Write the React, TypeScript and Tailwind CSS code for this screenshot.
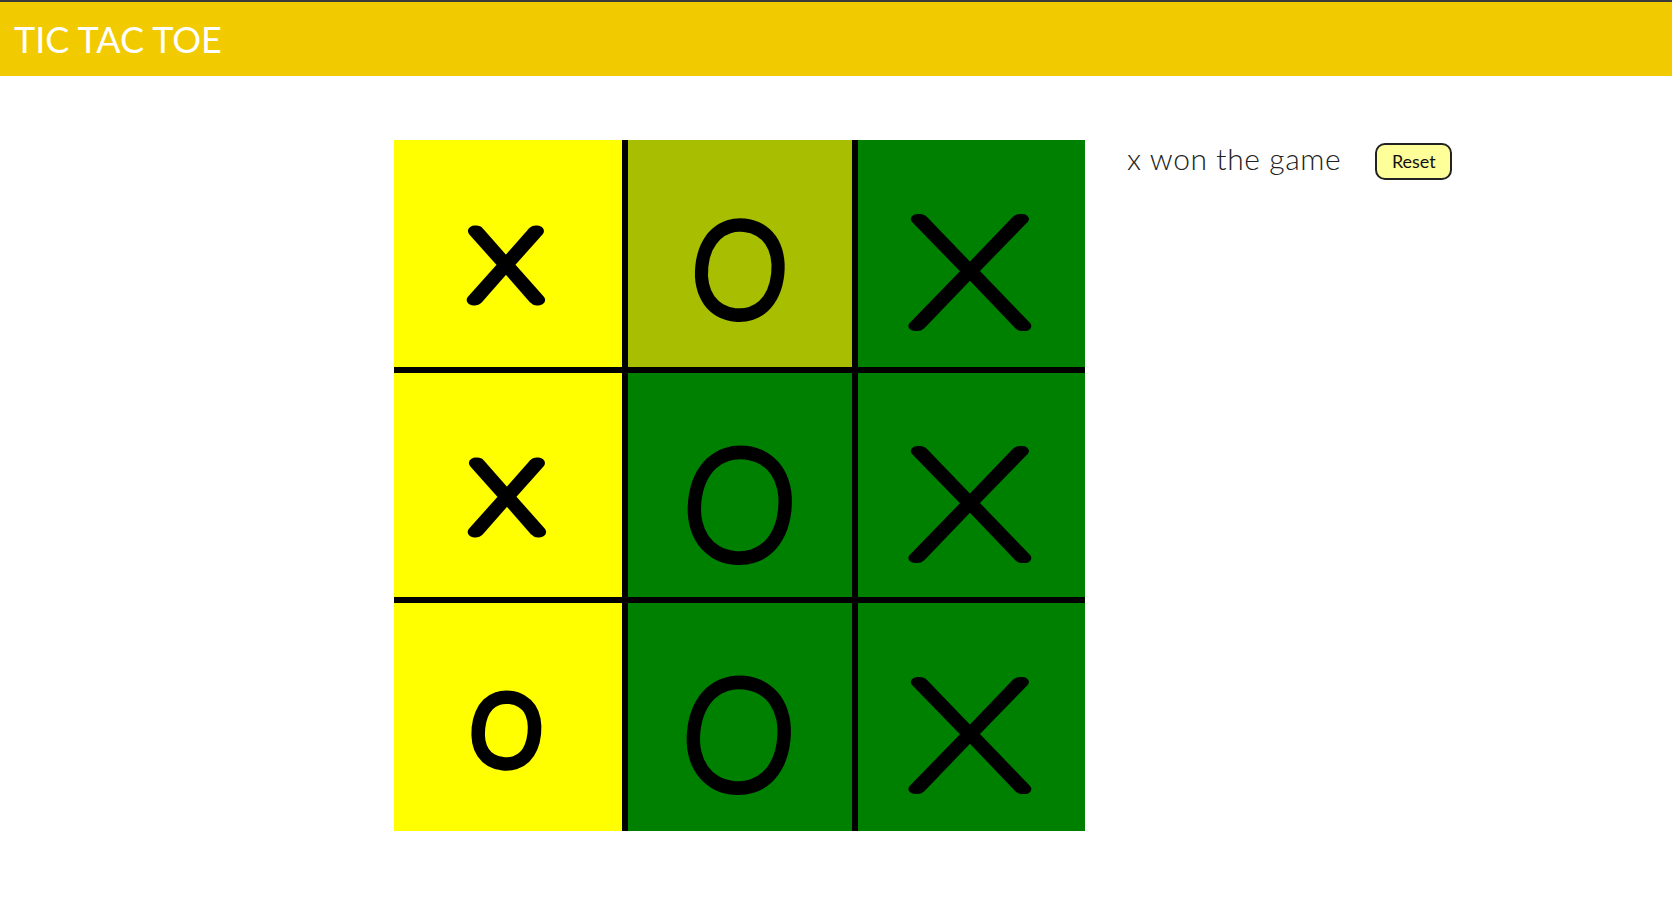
const cells = [
  { ch: "x", bg: "bg-[#ffff00]", size: 140, sx: 1.22, rot: 0, by: 160, cx: 112 },
  { ch: "O", bg: "bg-[#a8be00]", size: 128, sx: 0.94, rot: 6, by: 175, cx: 112 },
  { ch: "X", bg: "bg-[#008000]", size: 152, sx: 1.33, rot: 0, by: 186, cx: 112 },
  { ch: "x", bg: "bg-[#ffff00]", size: 140, sx: 1.22, rot: 0, by: 159, cx: 113 },
  { ch: "O", bg: "bg-[#008000]", size: 150, sx: 0.95, rot: 6, by: 185, cx: 112 },
  { ch: "X", bg: "bg-[#008000]", size: 152, sx: 1.33, rot: 0, by: 185, cx: 112 },
  { ch: "o", bg: "bg-[#ffff00]", size: 135, sx: 1, rot: 6, by: 161, cx: 114 },
  { ch: "O", bg: "bg-[#008000]", size: 150, sx: 0.95, rot: 6, by: 185, cx: 111 },
  { ch: "X", bg: "bg-[#008000]", size: 152, sx: 1.33, rot: 0, by: 186, cx: 112 },
];

const colW = [228, 224, 227];
const rowH = [227, 224, 228];

function Cell({ i }: { i: number }) {
  const c = cells[i];
  const w = colW[i % 3];
  const h = rowH[Math.floor(i / 3)];
  // rotate around the glyph's middle, which sits about half a cap height above the baseline
  const mid = -c.size * 0.36;
  return (
    <div className={`${c.bg} flex`}>
      <svg width={w} height={h} viewBox={`0 0 ${w} ${h}`}>
        <text
          transform={`translate(${c.cx} ${c.by}) rotate(${c.rot} 0 ${mid}) scale(${c.sx} 1)`}
          textAnchor="middle"
          fontSize={c.size}
          fontFamily="Lato, 'DejaVu Sans', sans-serif"
          fontWeight={100}
          fill="#000"
          stroke="#000"
          strokeWidth={12}
          strokeLinejoin="round"
          strokeLinecap="round"
          vectorEffect="non-scaling-stroke"
        >
          {c.ch}
        </text>
      </svg>
    </div>
  );
}

export default function App() {
  return (
    <div className="min-h-screen bg-white font-['Lato','Liberation_Sans',sans-serif]">
      <header className="h-[76px] border-t-2 border-[#3a3a3a] bg-[#f2ca00] flex items-center px-[14px]">
        <h1 className="text-white text-[36px] leading-none">TIC TAC TOE</h1>
      </header>
      <main className="flex items-start pt-[64px] pl-[394px]">
        <div className="grid grid-cols-[228px_224px_227px] grid-rows-[227px_224px_228px] gap-[6px] bg-black">
          {cells.map((_, i) => (
            <Cell key={i} i={i} />
          ))}
        </div>
        <div className="flex items-center mt-[3px] ml-[42px]">
          <p className="text-[30px] font-light leading-none text-[#222] tracking-[0.6px] -mt-[8px]">x won the game</p>
          <button className="ml-[34px] w-[77px] h-[37px] rounded-[10px] border-2 border-[#222] bg-[#ffff99] text-[18px] text-[#111]">
            Reset
          </button>
        </div>
      </main>
    </div>
  );
}
